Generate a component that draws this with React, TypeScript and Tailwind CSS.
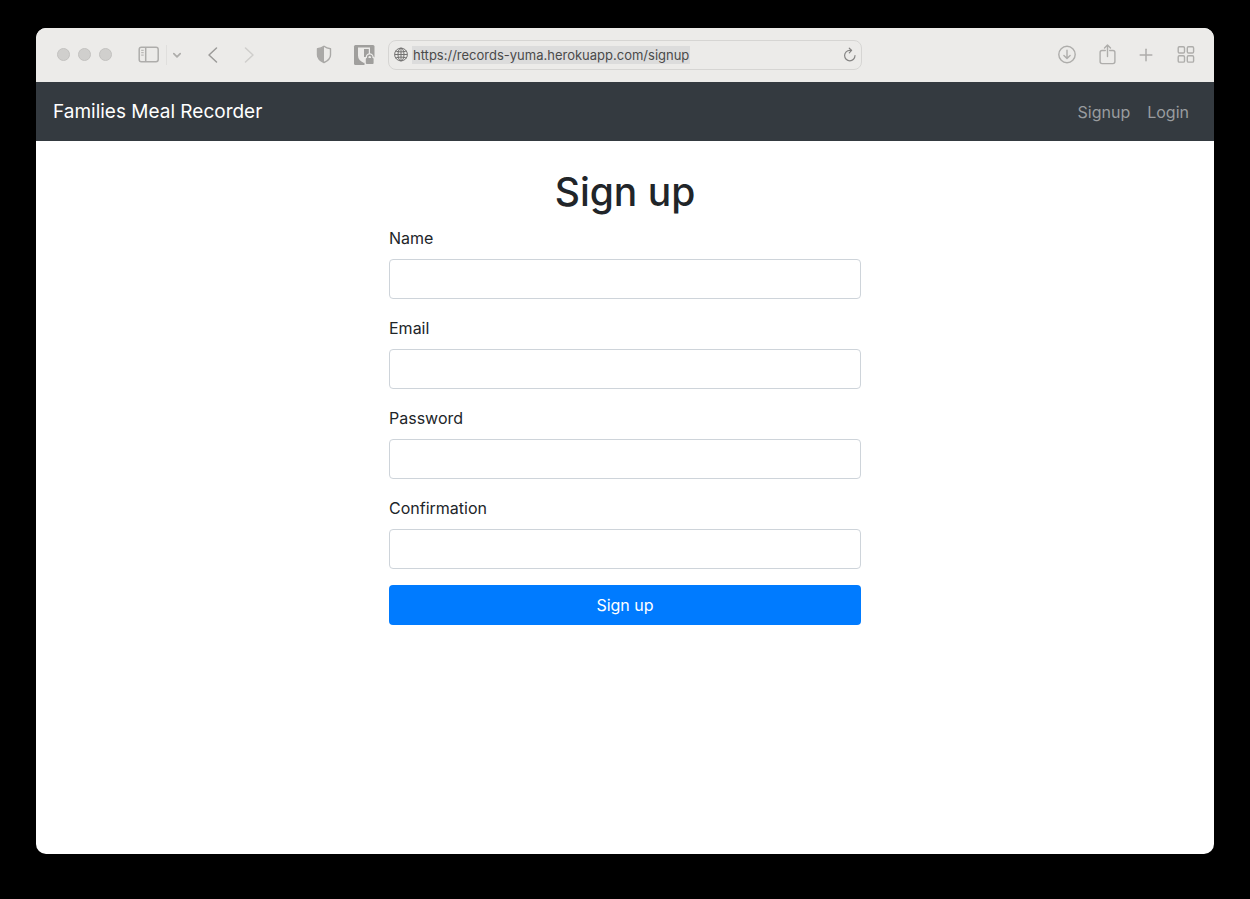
import { Plus } from "lucide-react";

const fields = [
  { id: "name", label: "Name", type: "text" },
  { id: "email", label: "Email", type: "email" },
  { id: "password", label: "Password", type: "password" },
  { id: "confirmation", label: "Confirmation", type: "password" },
];

export default function App() {
  return (
    <div className="flex min-h-screen flex-col bg-black px-9 pt-7 pb-[45px] font-['Inter','Liberation_Sans',sans-serif]">
      <div className="flex flex-1 flex-col overflow-hidden rounded-[10px] bg-white">
        <BrowserToolbar />
        <Navbar />
        <SignupPage />
      </div>
    </div>
  );
}

function BrowserToolbar() {
  return (
    <header className="grid h-[54px] grid-cols-[1fr_minmax(0,474px)_1fr] items-center bg-[#ecebe9] text-[#aeadab]">
      <div className="flex items-center justify-between pr-[13px] pb-px pl-[21px]">
        <div className="flex items-center">
          <div className="flex gap-2">
            <WindowButton label="Close" />
            <WindowButton label="Minimize" />
            <WindowButton label="Zoom" />
          </div>
          <button type="button" aria-label="Show sidebar" className="ml-[26px]">
            <SidebarIcon />
          </button>
          <span className="ml-[6px] h-5 w-px bg-[#e0dfdd]" />
          <button type="button" aria-label="Tab groups" className="ml-1">
            <svg width="12" height="12" viewBox="0 0 12 12" fill="none" stroke="currentColor" strokeWidth="1.7" strokeLinecap="round" strokeLinejoin="round">
              <path d="M2.8 4.6 6 7.8l3.2-3.2" />
            </svg>
          </button>
          <button type="button" aria-label="Back" className="ml-6">
            <svg width="12" height="18" viewBox="0 0 12 18" fill="none" stroke="#9c9b99" strokeWidth="1.5" strokeLinecap="round" strokeLinejoin="round">
              <path d="M9.5 2 2 9l7.5 7" />
            </svg>
          </button>
          <button type="button" aria-label="Forward" className="ml-6">
            <svg width="12" height="18" viewBox="0 0 12 18" fill="none" stroke="#cfcecc" strokeWidth="1.5" strokeLinecap="round" strokeLinejoin="round">
              <path d="M2.5 2 10 9l-7.5 7" />
            </svg>
          </button>
        </div>
        <div className="flex items-center gap-5">
          <button type="button" aria-label="Privacy report">
            <ShieldIcon />
          </button>
          <button type="button" aria-label="Password manager">
            <PasswordIcon />
          </button>
        </div>
      </div>

      <div className="flex h-[30px] items-center rounded-lg border border-[#d6d5d3] px-1">
        <GlobeIcon />
        <input
          aria-label="Address"
          defaultValue="https://records-yuma.herokuapp.com/signup"
          className="ml-[3px] h-[18px] field-sizing-content min-w-0 bg-[#dcdcdc] px-px pt-px text-[13px] text-[#4a4a4a] outline-none"
        />
        <button type="button" aria-label="Reload" className="ml-auto">
          <ReloadIcon />
        </button>
      </div>

      <div className="flex items-center justify-end gap-5 pr-[18px] pb-px">
        <button type="button" aria-label="Downloads">
          <svg width="20" height="20" viewBox="0 0 20 20" fill="none" stroke="currentColor" strokeWidth="1.4" strokeLinecap="round" strokeLinejoin="round">
            <circle cx="11" cy="9.5" r="8.2" />
            <path d="M11 5.3v8M7.9 10.4l3.1 3.1 3.1-3.1" />
          </svg>
        </button>
        <button type="button" aria-label="Share">
          <svg width="20" height="22" viewBox="0 0 20 22" fill="none" stroke="currentColor" strokeWidth="1.4" strokeLinecap="round" strokeLinejoin="round">
            <path d="M9.3 6.500H6.100a2 2 0 0 0-2 2v9.100a2 2 0 0 0 2 2h10.800a2 2 0 0 0 2-2V8.500a2 2 0 0 0-2-2h-3.200" />
            <path d="M11.500 12.500V1.200M8.500 4 11.500 1l3 3" />
          </svg>
        </button>
        <button type="button" aria-label="New tab">
          <Plus size={20} strokeWidth={1.8} />
        </button>
        <button type="button" aria-label="Tab overview">
          <svg width="20" height="20" viewBox="0 0 20 20" fill="none" stroke="currentColor" strokeWidth="1.4">
            <rect x="2.2" y="1.7" width="6.300" height="6.300" rx="1.2" />
            <rect x="11.300" y="1.7" width="6.300" height="6.300" rx="1.2" />
            <rect x="2.2" y="10.800" width="6.300" height="6.300" rx="1.2" />
            <rect x="11.300" y="10.800" width="6.300" height="6.300" rx="1.2" />
          </svg>
        </button>
      </div>
    </header>
  );
}

function WindowButton({ label }: { label: string }) {
  return (
    <button
      type="button"
      aria-label={label}
      className="h-[13px] w-[13px] rounded-full border border-[#c3c2c0] bg-[#d0cfcd]"
    />
  );
}

function Navbar() {
  return (
    <nav className="flex h-[59px] items-center justify-between bg-[#343a40] px-[17px]">
      <a href="#" className="text-[19px] leading-[30px] text-white">
        Families Meal Recorder
      </a>
      <div className="flex gap-[17px] pr-2 text-base text-[#999c9f]">
        <a href="#signup">Signup</a>
        <a href="#login">Login</a>
      </div>
    </nav>
  );
}

function SignupPage() {
  return (
    <main className="px-4 pt-[26px] pb-8 text-[#212529]">
      <h1 className="mb-2 text-center text-[39px] leading-[50px] font-medium">Sign up</h1>
      <form className="mx-auto max-w-[472px]" onSubmit={(e) => e.preventDefault()}>
        {fields.map((field) => (
          <div key={field.id} className="mb-4">
            <label htmlFor={field.id} className="mb-2 block text-base leading-[26px]">
              {field.label}
            </label>
            <input
              id={field.id}
              type={field.type}
              className="block h-10 w-full rounded border border-[#ced4da] bg-white px-3 text-base outline-none focus:border-[#80bdff]"
            />
          </div>
        ))}
        <button type="submit" className="h-10 w-full rounded bg-[#007bff] text-base text-white">
          Sign up
        </button>
      </form>
    </main>
  );
}

function SidebarIcon() {
  return (
    <svg width="22" height="18" viewBox="0 0 22 18" fill="none" stroke="currentColor" strokeWidth="1.5">
      <rect x="1.2" y="1.2" width="19" height="14.6" rx="2.2" />
      <path d="M7.7 1.2v14.6" />
      <path d="M3.2 4.3h2.5M3.2 6.7h2.5M3.2 9.1h2.5" strokeWidth="1" />
    </svg>
  );
}

function ShieldIcon() {
  return (
    <svg width="18" height="20" viewBox="0 0 18 20" fill="none">
      <path
        d="M9 1.3c1.8 1.5 4 2.3 6.5 2.4V10c0 3.400-2.800 5.800-6.500 7.500C5.300 15.800 2.500 13.400 2.500 10V3.700C5 3.600 7.200 2.800 9 1.300Z"
        stroke="#aaa9a7"
        strokeWidth="1.4"
        strokeLinejoin="round"
      />
      <path d="M9 1.300v16.200C5.300 15.800 2.500 13.400 2.500 10V3.700C5 3.600 7.200 2.800 9 1.300Z" fill="#aaa9a7" />
    </svg>
  );
}

function PasswordIcon() {
  return (
    <svg width="22" height="22" viewBox="0 0 22 22">
      <rect x="1" y="1" width="20.500" height="20" rx="1.5" fill="#a09f9d" />
      {/* shield cut-out with its dark quarter */}
      <path d="M5 3.500h12v13l-6 2.500C7.200 17.200 5 15 5 11.500Z" fill="#ecebe9" />
      <path d="M11 5h4.800v5l-2.800 3H11Z" fill="#a09f9d" />
      {/* padlock with a clear margin round it */}
      <path d="M11.500 22v-8.500l1.300-.8c.3-2.200 1.800-3.500 3.900-3.500s3.600 1.300 3.900 3.500l1.400.8V22Z" fill="#ecebe9" />
      <path d="M14.700 14.500v-1.300a2 2 0 0 1 4 0v1.300" fill="none" stroke="#a09f9d" strokeWidth="1.5" />
      <rect x="12.800" y="14" width="7.800" height="6" rx="1" fill="#a09f9d" />
    </svg>
  );
}

function GlobeIcon() {
  return (
    <svg width="16" height="16" viewBox="0 0 16 16" fill="none" stroke="#747372" strokeWidth="1" className="shrink-0">
      <circle cx="8" cy="7.500" r="6.400" />
      <ellipse cx="8" cy="7.500" rx="3" ry="6.400" />
      <path d="M8 1.100v12.800M1.600 7.500h12.800M2.700 4c3 1.200 7.600 1.200 10.600 0M2.700 11c3-1.200 7.600-1.200 10.600 0" />
    </svg>
  );
}

function ReloadIcon() {
  return (
    <svg width="14" height="16" viewBox="0 0 14 16" fill="none" stroke="#858483" strokeWidth="1.2" strokeLinecap="round" strokeLinejoin="round">
      <path d="M12 8.600a5.200 5.200 0 1 1-5.200-5.200h1.400" />
      <path d="M6.300 1.200 8.600 3.400 6.300 5.800" />
    </svg>
  );
}
